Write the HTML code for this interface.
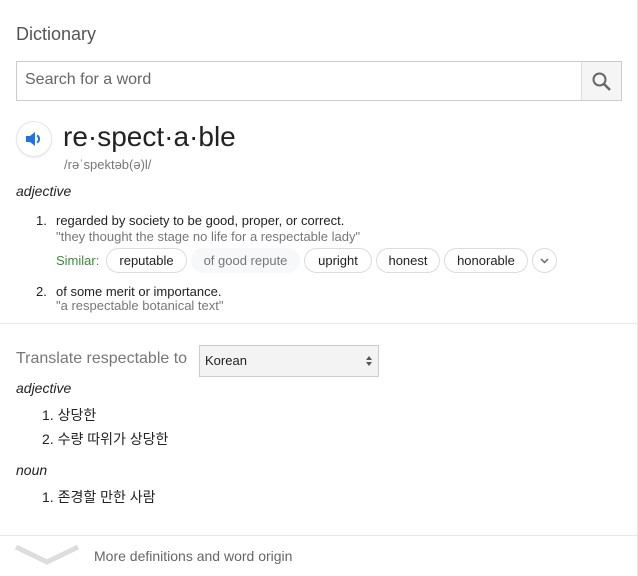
<!DOCTYPE html>
<html><head><meta charset="utf-8"><style>
*{margin:0;padding:0;box-sizing:border-box}
body{width:638px;height:576px;background:#fff;font-family:"Liberation Sans","Noto Sans CJK KR",sans-serif;color:#222;position:relative;overflow:hidden}
.a{position:absolute;white-space:nowrap}
.chip{position:absolute;top:248px;height:25px;border:1px solid #dadce0;border-radius:13px;font-size:13px;color:#222;line-height:23px;text-align:center}
.k{font-size:13px}
.ko{font-size:14px}
</style></head><body>
<div style="position:absolute;right:0;top:0;width:1px;height:576px;background:#e6e6e6"></div>
<div class="a" style="left:16px;top:24px;font-size:18px;color:#555">Dictionary</div>
<div style="position:absolute;left:16px;top:61px;width:606px;height:40px;border:1px solid #ccc"></div>
<div class="a" style="left:25px;top:71px;font-size:16px;color:#666">Search for a word</div>
<div style="position:absolute;left:581px;top:62px;width:40px;height:38px;background:#f5f5f5;border-left:1px solid #ddd"></div>
<svg class="a" style="left:591px;top:71px" width="22" height="22" viewBox="0 0 22 22"><circle cx="8.5" cy="8.5" r="6" fill="none" stroke="#666" stroke-width="2"/><line x1="13" y1="13" x2="19" y2="19" stroke="#666" stroke-width="2.4"/></svg>
<div style="position:absolute;left:16px;top:121px;width:36px;height:36px;border-radius:50%;border:1px solid #e4e4e4;box-shadow:0 1px 2px rgba(0,0,0,.08)"></div>
<svg class="a" style="left:24px;top:129px" width="20" height="20" viewBox="0 0 20 20"><path d="M2 7h4l5-4v14l-5-4H2z" fill="#1a73e8"/><path d="M13 6.5a4 4 0 0 1 0 7" fill="none" stroke="#1a73e8" stroke-width="2"/></svg>
<div class="a" style="left:63px;top:121px;font-size:28px;color:#222">re·spect·a·ble</div>
<div class="a" style="left:64px;top:157px;font-size:13px;color:#777">/rəˈspektəb(ə)l/</div>
<div class="a" style="left:16px;top:183px;font-size:14px;font-style:italic">adjective</div>
<div class="a k" style="left:36px;top:213px">1.</div>
<div class="a" style="left:56px;top:213px;font-size:13px">regarded by society to be good, proper, or correct.</div>
<div class="a" style="left:56px;top:229px;font-size:13px;color:#777">"they thought the stage no life for a respectable lady"</div>
<div class="a" style="left:56px;top:253px;font-size:13px;color:#3c8a3c">Similar:</div>
<div class="chip" style="left:106px;width:81px">reputable</div>
<div class="chip" style="left:191px;width:109px;border-color:#f7f8fa;background:#f7f8fa;color:#777">of good repute</div>
<div class="chip" style="left:304px;width:68px">upright</div>
<div class="chip" style="left:376px;width:64px">honest</div>
<div class="chip" style="left:444px;width:84px">honorable</div>
<div class="chip" style="left:532px;width:25px;padding:0"><svg width="23" height="23" viewBox="0 0 23 23"><path d="M8 10l3.5 3.5L15 10" fill="none" stroke="#666" stroke-width="1.5"/></svg></div>
<div class="a k" style="left:36px;top:284px">2.</div>
<div class="a" style="left:56px;top:284px;font-size:13px">of some merit or importance.</div>
<div class="a" style="left:56px;top:298px;font-size:13px;color:#777">"a respectable botanical text"</div>
<div style="position:absolute;left:0;top:323px;width:638px;height:1px;background:#e8e8e8"></div>
<div class="a" style="left:16px;top:350px;font-size:16px;color:#777">Translate respectable to</div>
<div style="position:absolute;left:199px;top:345px;width:180px;height:32px;background:#f3f3f3;border:1px solid #ccc"></div>
<div class="a" style="left:205px;top:353px;font-size:13px">Korean</div>
<svg class="a" style="left:365px;top:354px" width="8" height="14" viewBox="0 0 8 14"><path d="M1 6l3-4 3 4zM1 8l3 4 3-4z" fill="#555"/></svg>
<div class="a" style="left:16px;top:380px;font-size:14px;font-style:italic">adjective</div>
<div class="a ko" style="left:42px;top:405px">1. 상당한</div>
<div class="a ko" style="left:42px;top:429px">2. 수량 따위가 상당한</div>
<div class="a" style="left:16px;top:462px;font-size:14px;font-style:italic">noun</div>
<div class="a ko" style="left:42px;top:487px">1. 존경할 만한 사람</div>
<div style="position:absolute;left:0;top:535px;width:638px;height:1px;background:#e8e8e8"></div>
<svg class="a" style="left:14px;top:544px" width="66" height="24" viewBox="0 0 66 24"><path d="M2 3l31 15 31-15" fill="none" stroke="#ddd" stroke-width="5"/></svg>
<div class="a" style="left:94px;top:548px;font-size:14px;color:#666">More definitions and word origin</div>
</body></html>
